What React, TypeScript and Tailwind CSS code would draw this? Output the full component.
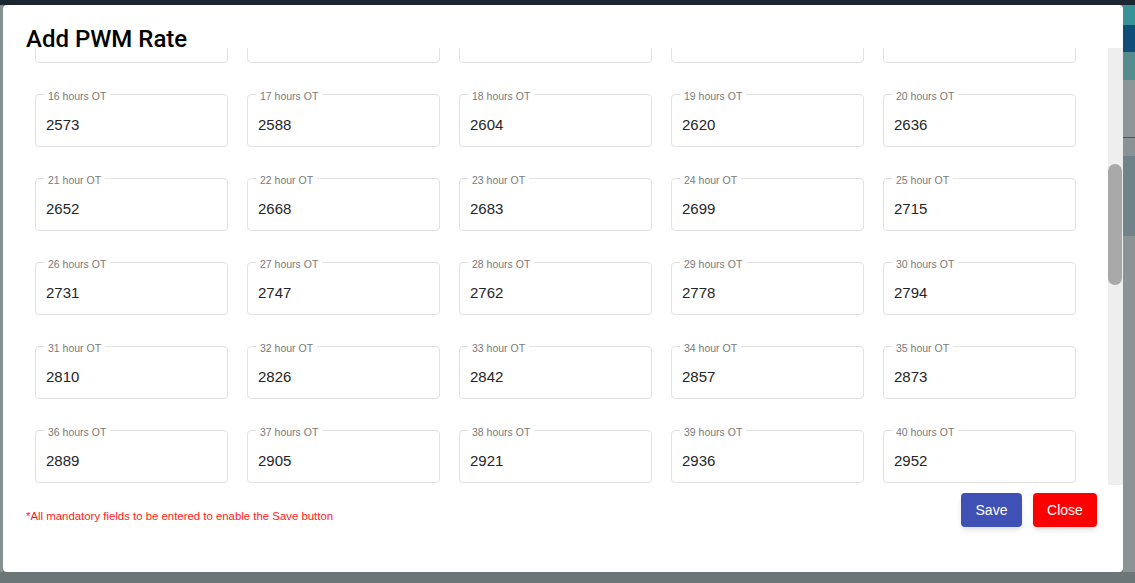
const rows = [
  [
    {label: "16 hours OT", value: "2573"},
    {label: "17 hours OT", value: "2588"},
    {label: "18 hours OT", value: "2604"},
    {label: "19 hours OT", value: "2620"},
    {label: "20 hours OT", value: "2636"},
  ],
  [
    {label: "21 hour OT", value: "2652"},
    {label: "22 hour OT", value: "2668"},
    {label: "23 hour OT", value: "2683"},
    {label: "24 hour OT", value: "2699"},
    {label: "25 hour OT", value: "2715"},
  ],
  [
    {label: "26 hours OT", value: "2731"},
    {label: "27 hours OT", value: "2747"},
    {label: "28 hours OT", value: "2762"},
    {label: "29 hours OT", value: "2778"},
    {label: "30 hours OT", value: "2794"},
  ],
  [
    {label: "31 hour OT", value: "2810"},
    {label: "32 hour OT", value: "2826"},
    {label: "33 hour OT", value: "2842"},
    {label: "34 hour OT", value: "2857"},
    {label: "35 hour OT", value: "2873"},
  ],
  [
    {label: "36 hours OT", value: "2889"},
    {label: "37 hours OT", value: "2905"},
    {label: "38 hours OT", value: "2921"},
    {label: "39 hours OT", value: "2936"},
    {label: "40 hours OT", value: "2952"},
  ],
]

function RateField({label, value}: {label?: string; value?: string}) {
  return (
    <div className="relative h-[53px] rounded-[4px] border border-[#e2e2e2]">
      {label && (
        <span className="absolute left-[8px] -top-[6px] bg-white px-[4px] text-[10.5px] leading-[14px] text-[#7a7a7a]">
          {label}
        </span>
      )}
      <div className="pl-[10px] pt-[20px] text-[15px] leading-[20px] text-[#262626]">{value}</div>
    </div>
  )
}

export default function App() {
  return (
    <div className="flex h-[583px] w-[1135px] flex-col overflow-hidden bg-[#6e7879] font-['Liberation_Sans',Arial,sans-serif]">
      <div className="h-[5px] shrink-0 bg-[#1b2630]" />
      <div className="flex shrink-0">
        <div className="w-[3px] bg-[#859091]" />
        <div className="flex h-[567px] w-[1120px] flex-col rounded-[4px] bg-white">
          {/* header */}
          <div className="h-[43px] shrink-0 pl-[23px] pt-[25px]">
            <h2 className="font-['Roboto',sans-serif] text-[24px] font-medium leading-[18px] text-black">Add PWM Rate</h2>
          </div>

          {/* scroll area, scrolled part way down */}
          <div className="flex h-[437px] shrink-0">
            <div className="flex-1 overflow-hidden pl-[32px] pr-[30px]">
              <div className="-mt-[38px] flex flex-col gap-[31px]">
                <div className="grid grid-cols-[repeat(5,193px)] gap-x-[19px]">
                  {[0, 1, 2, 3, 4].map(i => (
                    <RateField key={i} />
                  ))}
                </div>
                {rows.map((row, i) => (
                  <div key={i} className="grid grid-cols-[repeat(5,193px)] gap-x-[19px]">
                    {row.map(f => (
                      <RateField key={f.label} label={f.label} value={f.value} />
                    ))}
                  </div>
                ))}
              </div>
            </div>
            <div className="w-[15px] bg-[#eeeeee] pt-[116px]">
              <div className="h-[121px] w-[14px] rounded-full bg-[#a8a8a8]" />
            </div>
          </div>

          {/* footer */}
          <div className="flex flex-1 items-start justify-between pl-[23px] pr-[26px]">
            <p className="mt-[24px] text-[11.4px] leading-[14px] text-[#ff1a1a]">
              *All mandatory fields to be entered to enable the Save button
            </p>
            <div className="mt-[8px] flex gap-[11px]">
              <button type="button" className="h-[34px] w-[61px] rounded-[4px] bg-[#3f51b5] text-[14px] text-white shadow-md">
                Save
              </button>
              <button type="button" className="h-[34px] w-[64px] rounded-[4px] bg-[#ff0000] text-[14px] text-white shadow-md">
                Close
              </button>
            </div>
          </div>
        </div>
        <div className="flex flex-1 flex-col">
          <div className="h-[20px] bg-[#3b9198]" />
          <div className="h-[27px] bg-[#0e4e78]" />
          <div className="h-[28px] bg-[#568b8e]" />
          <div className="h-[57px] bg-[#8e9698]" />
          <div className="h-[1px] bg-[#4d5557]" />
          <div className="h-[18px] bg-[#8a9294]" />
          <div className="h-[80px] bg-[#6f8389]" />
          <div className="flex-1 bg-[#8b9395]" />
        </div>
      </div>
      <div className="flex-1 bg-[#6c7677]" />
    </div>
  )
}
